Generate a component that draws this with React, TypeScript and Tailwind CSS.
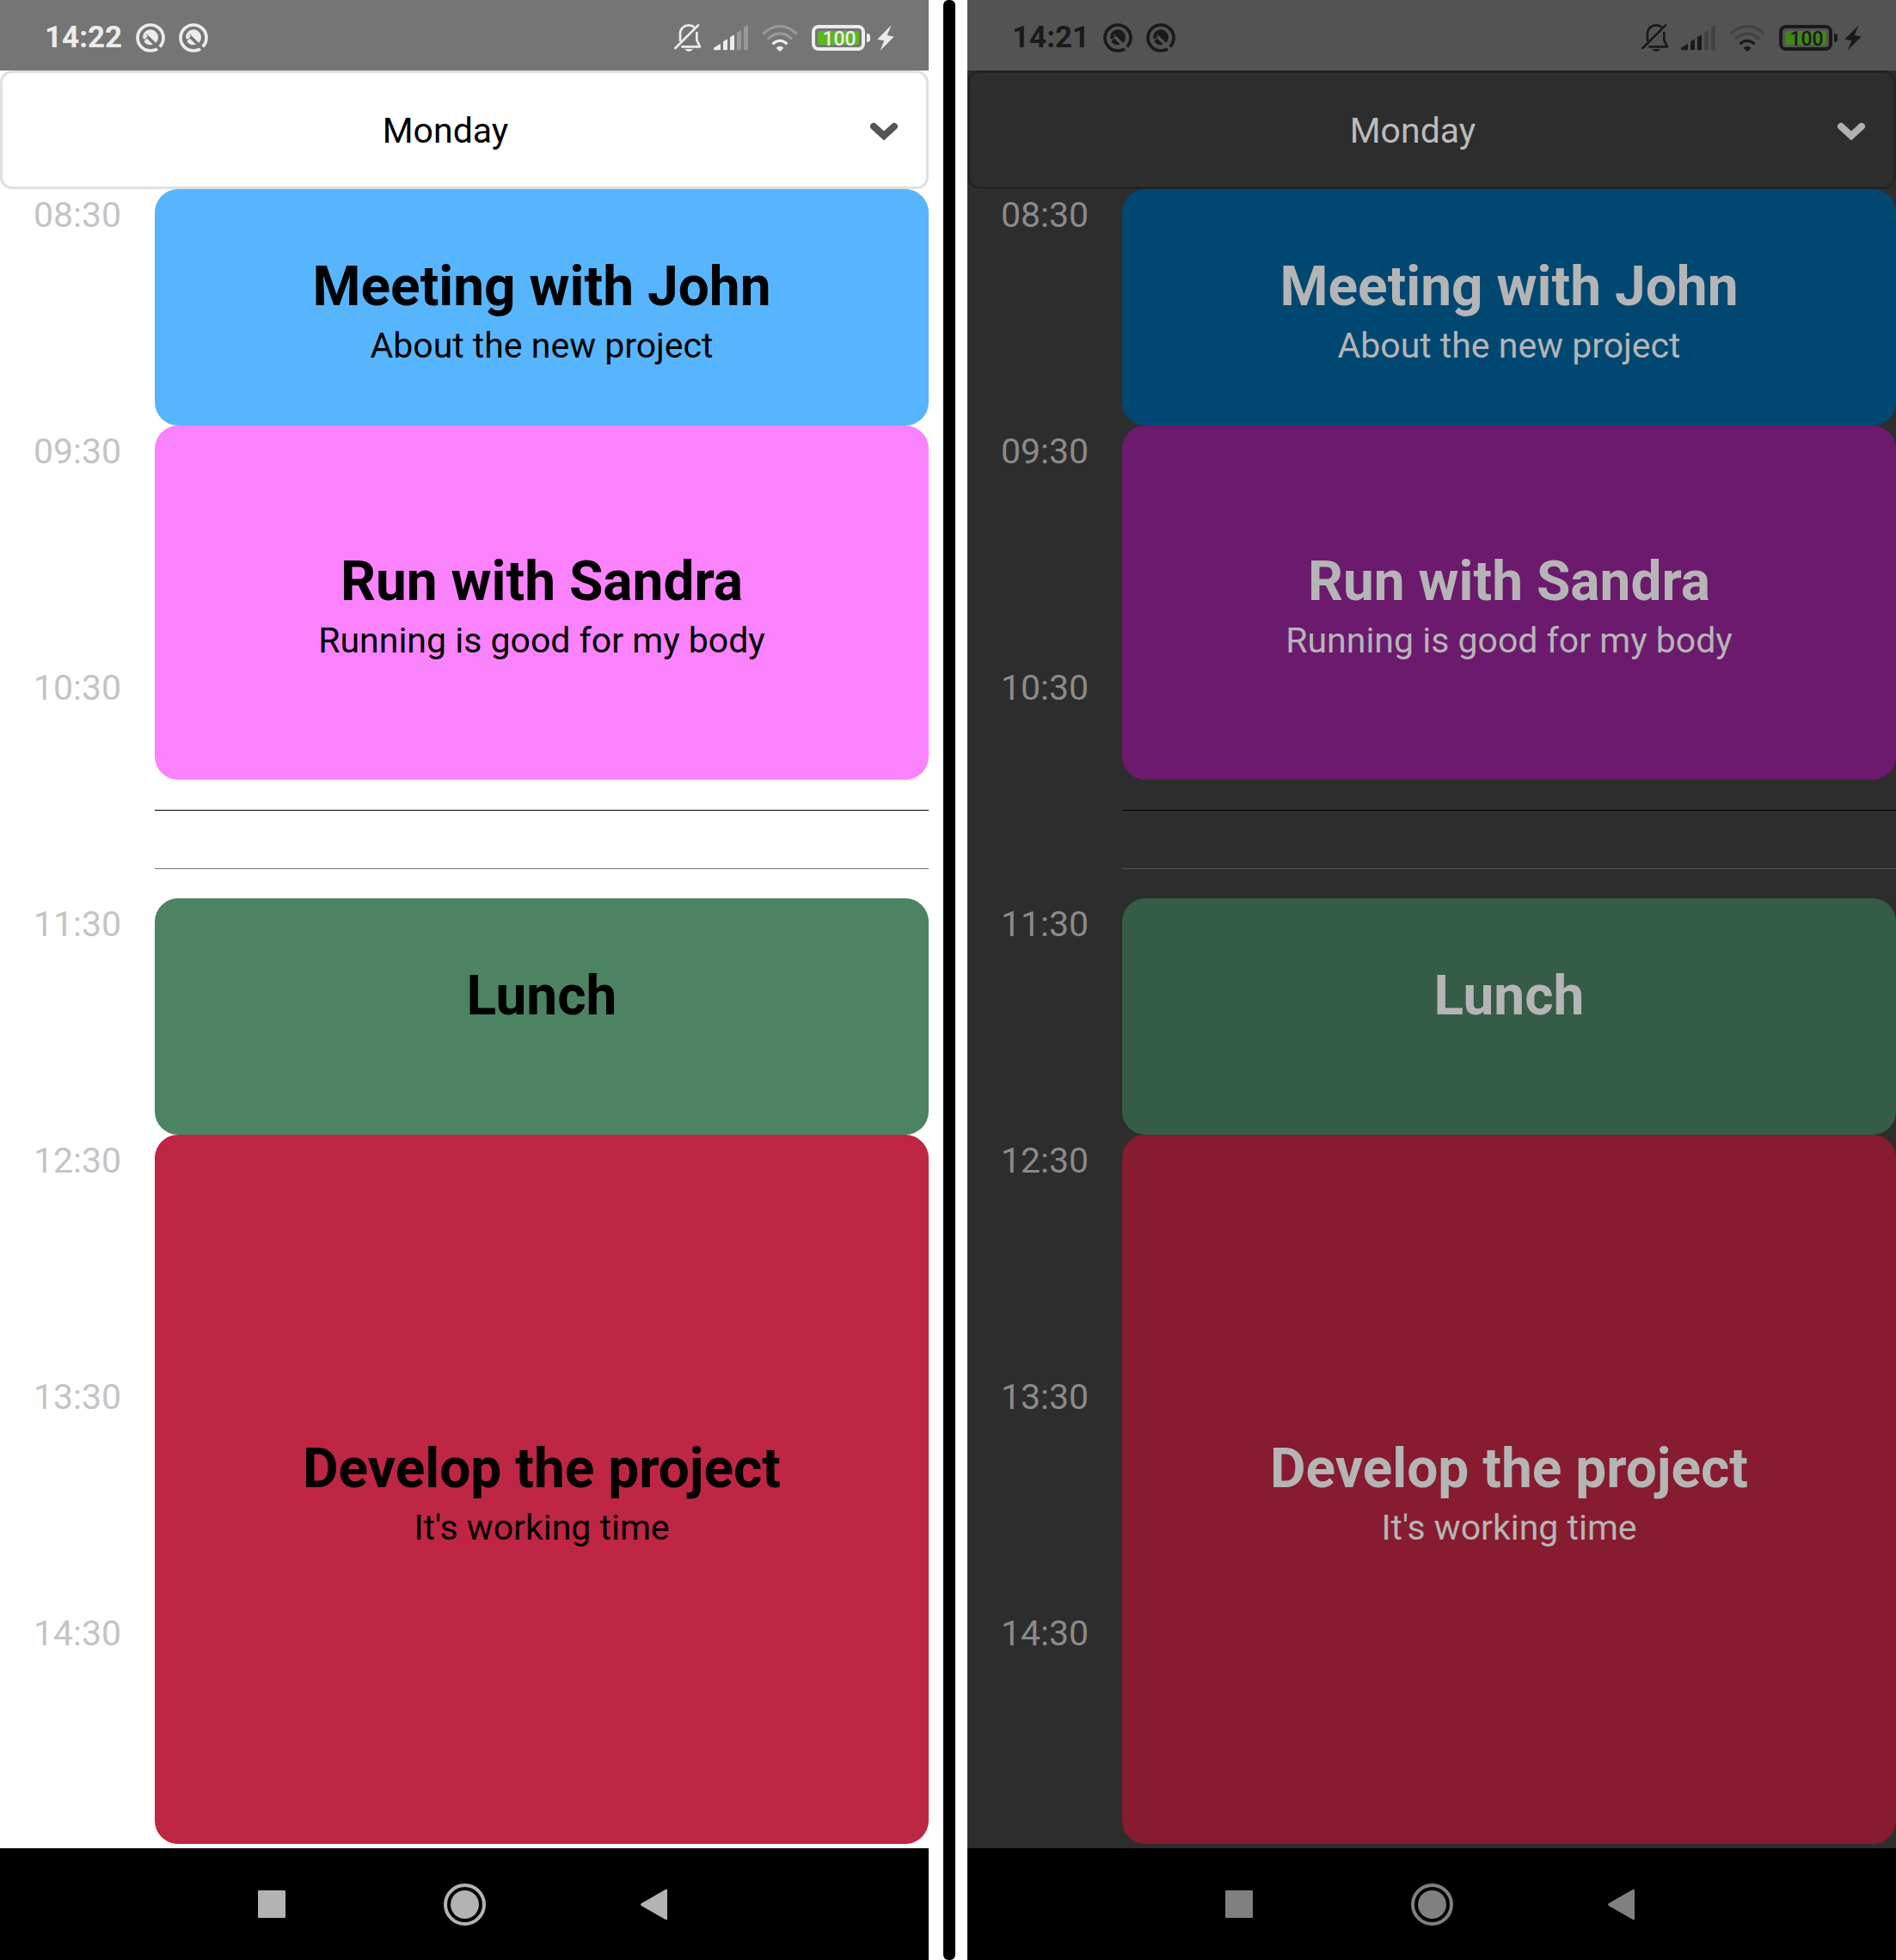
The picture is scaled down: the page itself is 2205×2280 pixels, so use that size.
import React from "react";

type Theme = {
  page: string;
  status: string;
  cut: string;
  charge: string;
  select: string;
  chevron: string;
  time: string;
  title: string;
  halfLine: string;
  nav: string;
  cards: string[];
};

const light: Theme = {
  page: "bg-white",
  status: "bg-[#757575] text-[#ececec]",
  cut: "stroke-[#757575]",
  charge: "fill-[#5cb624]",
  select: "bg-white border-[#e0e0e0] text-black",
  chevron: "text-[#555555]",
  time: "text-[#c4c4c4]",
  title: "text-black",
  halfLine: "border-[#737373]",
  nav: "text-[#b3b3b3]",
  cards: ["bg-[#57b5fd]", "bg-[#fb82fd]", "bg-[#4c8363]", "bg-[#bf2643]"],
};

const dark: Theme = {
  page: "bg-[#2d2d2d]",
  status: "bg-[#535353] text-[#1a1a1a]",
  cut: "stroke-[#535353]",
  charge: "fill-[#418619]",
  select: "bg-[#2d2d2d] border-[#242424] text-[#bbbbbb]",
  chevron: "text-[#b0b0b0]",
  time: "text-[#8a8a8a]",
  title: "text-[#b5b5b5]",
  halfLine: "border-[#555555]",
  nav: "text-[#808080]",
  cards: ["bg-[#004872]", "bg-[#6b1a6e]", "bg-[#355c46]", "bg-[#871b30]"],
};

const days = ["Monday", "Tuesday", "Wednesday", "Thursday", "Friday", "Saturday", "Sunday"];
const times = ["08:30", "09:30", "10:30", "11:30", "12:30", "13:30", "14:30"];

function QIcon({ cut }: { cut: string }) {
  return (
    <svg className="size-[34px]" viewBox="0 0 102 102" fill="none" aria-hidden="true">
      <circle cx="51" cy="51" r="45" stroke="currentColor" strokeWidth="11" />
      <circle cx="51" cy="49" r="27" fill="currentColor" />
      <path d="M22 61 38 45 94 101" className={cut} strokeWidth="11" />
      <path d="M27 54 39 42" stroke="currentColor" strokeWidth="8" />
    </svg>
  );
}

function BellOffIcon() {
  return (
    <svg className="h-8 w-8" viewBox="0 0 96 96" fill="none" stroke="currentColor" strokeWidth="8" aria-hidden="true">
      <path d="M4 84 84 4" strokeLinecap="round" />
      <path d="M21 60V34C21 15 35 4 51 4C60 4 66 7 71 12" />
      <path d="M79 27V56L90 79H25" strokeLinejoin="round" />
      <path d="M37 87H66Q60 96 51 96Q43 96 37 87Z" fill="currentColor" stroke="none" />
    </svg>
  );
}

function SignalIcon() {
  return (
    <svg className="h-[30px] w-10" viewBox="0 0 120 90" fill="currentColor" aria-hidden="true">
      <path d="M0 80 24 65V88H4Q0 88 0 84Z" />
      <path d="M33 58 48 49V85L45 88H36L33 85Z" />
      <path d="M57 43 72 34V85L69 88H60L57 85Z" />
      <path d="M81 27 96 17V85L93 88H84L81 85Z" opacity="0.3" />
      <path d="M105 11Q107 3 120 1V88H108L105 85Z" opacity="0.3" />
    </svg>
  );
}

function WifiIcon() {
  return (
    <svg className="h-8 w-[42px]" viewBox="0 0 126 96" fill="none" stroke="currentColor" strokeWidth="10" aria-hidden="true">
      <path d="M4 35Q30 8 63 8T122 35" opacity="0.3" />
      <path d="M21 53Q40 33 63 33T105 53" opacity="0.3" />
      <path d="M38 70Q49 58 63 58T88 70" />
      <path d="M50 83Q55 77 63 77T76 83L67 93Q63 96 59 93Z" fill="currentColor" stroke="none" />
    </svg>
  );
}

function BatteryIcon({ charge }: { charge: string }) {
  return (
    <svg className="h-[30px] w-[68px]" viewBox="0 0 204 90" aria-hidden="true">
      <rect x="6" y="6" width="174" height="78" rx="18" fill="none" stroke="currentColor" strokeWidth="12" />
      <rect x="21" y="21" width="144" height="49" rx="8" className={charge} />
      <path d="M192 30Q204 31 204 38V52Q204 59 192 60Z" fill="currentColor" />
      <text x="96" y="72" textAnchor="middle" fontSize="69" fontWeight="500" fill="currentColor">
        100
      </text>
    </svg>
  );
}

function BoltIcon() {
  return (
    <svg className="h-[30px] w-5" viewBox="0 0 60 90" fill="currentColor" aria-hidden="true">
      <path d="M50 1 1 50 25 55 11 89 59 41 35 36Z" />
    </svg>
  );
}

function StatusBar({ time, theme }: { time: string; theme: Theme }) {
  return (
    <header className={`flex h-[82px] shrink-0 items-center justify-between pt-1.5 pr-10 pl-[52px] ${theme.status}`}>
      <div className="flex items-center gap-4">
        <span className="text-[35px] leading-10 font-bold">{time}</span>
        <QIcon cut={theme.cut} />
        <QIcon cut={theme.cut} />
      </div>
      <div className="flex items-center">
        <BellOffIcon />
        <span className="ml-3.5"><SignalIcon /></span>
        <span className="ml-4"><WifiIcon /></span>
        <span className="ml-4"><BatteryIcon charge={theme.charge} /></span>
        <span className="ml-2"><BoltIcon /></span>
      </div>
    </header>
  );
}

function DaySelect({ theme }: { theme: Theme }) {
  return (
    <div className="relative shrink-0">
      <select
        aria-label="Day"
        defaultValue="Monday"
        className={`block h-[138px] w-full appearance-none rounded-[14px] border-3 pt-1 pr-11 text-center text-[41px] ${theme.select}`}
      >
        {days.map((day) => (
          <option key={day}>{day}</option>
        ))}
      </select>
      <svg
        className={`pointer-events-none absolute top-[60px] right-[34px] h-[21px] w-[34px] ${theme.chevron}`}
        viewBox="0 0 34 21"
        fill="none"
        stroke="currentColor"
        strokeWidth="8"
        strokeLinecap="round"
        aria-hidden="true"
      >
        <path d="M4 5 16 16 28 5" />
      </svg>
    </div>
  );
}

function Event({ title, note, size, color, theme }: { title: string; note: string; size: string; color: string; theme: Theme }) {
  return (
    <article className={`flex flex-col items-center justify-center rounded-[27px] pt-2 text-center ${size} ${color} ${theme.title}`}>
      <h2 className="text-[64px] leading-[80px] font-bold">{title}</h2>
      <p className="h-14 text-[41px] leading-14">{note}</p>
    </article>
  );
}

function Schedule({ theme }: { theme: Theme }) {
  return (
    <main className="flex pb-[5px]">
      <ol className={`w-[180px] shrink-0 text-center text-[41px] leading-12 ${theme.time}`}>
        {times.map((time) => (
          <li key={time} className="h-[275px] pt-1.5">{time}</li>
        ))}
      </ol>
      <div className="flex min-w-0 flex-1 flex-col">
        <Event title="Meeting with John" note="About the new project" size="h-[275px]" color={theme.cards[0]} theme={theme} />
        <Event title="Run with Sandra" note="Running is good for my body" size="h-[412px]" color={theme.cards[1]} theme={theme} />
        <div className="flex h-[138px] flex-col justify-between pt-[35px] pb-[34px]">
          <hr className="border-black" />
          <hr className={theme.halfLine} />
        </div>
        <Event title="Lunch" note="" size="h-[275px]" color={theme.cards[2]} theme={theme} />
        <Event title="Develop the project" note="It's working time" size="h-[825px]" color={theme.cards[3]} theme={theme} />
      </div>
    </main>
  );
}

function NavBar({ theme }: { theme: Theme }) {
  return (
    <nav className={`flex h-[130px] shrink-0 items-center justify-center bg-black ${theme.nav}`}>
      <button type="button" aria-label="Recent apps" className="flex w-56 justify-center">
        <svg className="size-[49px]" viewBox="0 0 49 49" fill="currentColor">
          <rect x="8" y="8" width="32" height="32" rx="1" />
        </svg>
      </button>
      <button type="button" aria-label="Home" className="flex w-56 justify-center">
        <svg className="size-[49px]" viewBox="0 0 49 49" fill="currentColor">
          <circle cx="24.5" cy="24.5" r="22.5" fill="none" stroke="currentColor" strokeWidth="4" />
          <circle cx="24.5" cy="24.5" r="16.5" />
        </svg>
      </button>
      <button type="button" aria-label="Back" className="flex w-56 justify-center">
        <svg className="size-[49px]" viewBox="0 0 49 49" fill="currentColor">
          <path d="M36 8V41Q36 43 34 42L6 26Q4 24.500 6 23L34 7Q36 6 36 8Z" />
        </svg>
      </button>
    </nav>
  );
}

function Phone({ time, theme }: { time: string; theme: Theme }) {
  return (
    <section className={`flex min-w-0 flex-1 flex-col justify-between ${theme.page}`}>
      <div>
        <StatusBar time={time} theme={theme} />
        <DaySelect theme={theme} />
        <Schedule theme={theme} />
      </div>
      <NavBar theme={theme} />
    </section>
  );
}

export default function App() {
  return (
    <div className="flex min-h-screen w-full bg-white font-['Roboto',sans-serif]">
      <Phone time="14:22" theme={light} />
      <div className="mr-3.5 ml-[17px] w-3.5 shrink-0 rounded-md bg-black" />
      <Phone time="14:21" theme={dark} />
    </div>
  );
}
